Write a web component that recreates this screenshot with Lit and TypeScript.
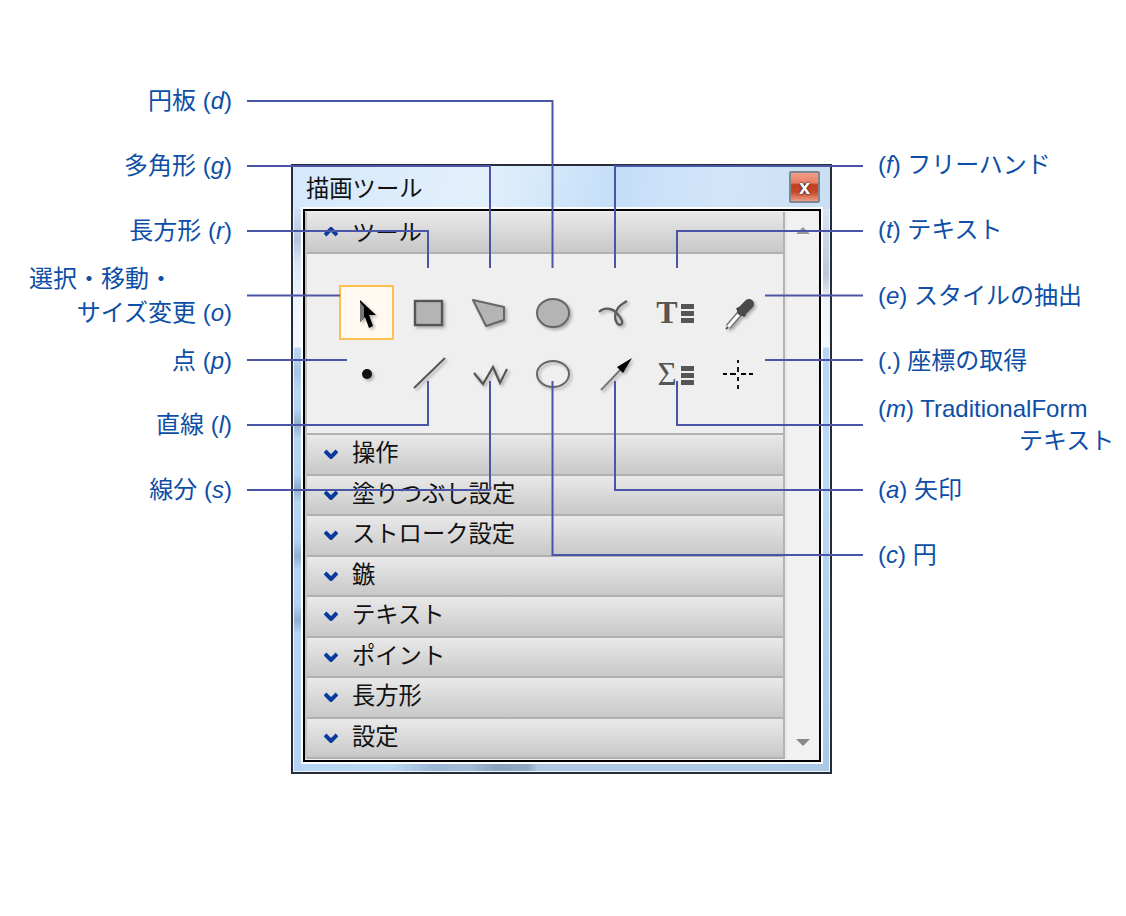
import { LitElement, html, css, svg } from "lit";
import { customElement } from "lit/decorators.js";

const S = 62;
const bars = svg`<g fill="#555"><rect x="35" y="22" width="13" height="5"/><rect x="35" y="29" width="13" height="5"/><rect x="35" y="36" width="13" height="5"/></g>`;
const icons = [
  svg`<rect x="4" y="4" width="53" height="53" fill="#fff9f1" stroke="#fdbf4d" stroke-width="2"/>
      <g class="sh"><path d="M24 18 L24 40 L29 35 L33 46 L37 44 L33 33 L40 33 Z" fill="#000"/><path d="M24 20 L24 40 L28 36 L28 25 Z" fill="#777"/></g>`,
  svg`<g class="sh"><rect x="17" y="19" width="27" height="24" fill="#b4b4b4" stroke="#555" stroke-width="2.4"/></g>`,
  svg`<g class="sh"><path d="M13 18 L44 25 L44 38 L26 44 Z" fill="#b4b4b4" stroke="#666" stroke-width="2" stroke-linejoin="round"/></g>`,
  svg`<g class="sh"><ellipse cx="31" cy="31" rx="16" ry="14" fill="#b4b4b4" stroke="#666" stroke-width="2"/></g>`,
  svg`<g class="sh"><path d="M15 30 C18 27 22 26 26 27 C31 28 36 34 38 39 C39 43 35 44 33 41 C30 37 31 31 34 26 C36 23 40 21 43 19" fill="none" stroke="#5c5c5c" stroke-width="2.4"/></g>`,
  svg`<text x="21" y="41" class="glyph">T</text>${bars}`,
  svg`<g class="sh"><path d="M20 45 L32 31" stroke="#777" stroke-width="6"/><path d="M20 45 L32 31" stroke="#fff" stroke-width="3"/><path d="M18 47 L20 45" stroke="#555" stroke-width="2"/><path d="M29 26 L37 34" stroke="#333" stroke-width="3"/><path d="M34 29 L41 22" stroke="#4a4a4a" stroke-width="10" stroke-linecap="round"/></g>`,
  svg`<g class="sh"><circle cx="31" cy="30" r="5" fill="#111"/></g>`,
  svg`<g class="sh"><path d="M16 44 L47 14" stroke="#555" stroke-width="2"/></g>`,
  svg`<g class="sh"><path d="M14 29 L23 40 L33 23 L40 39 L47 25" fill="none" stroke="#555" stroke-width="2.2"/></g>`,
  svg`<g class="sh"><ellipse cx="31" cy="30" rx="16" ry="13" fill="none" stroke="#666" stroke-width="2"/></g>`,
  svg`<g class="sh"><path d="M17 46 L40 22" stroke="#777" stroke-width="2"/><path d="M48 14 L33 23 L39 29 Z" fill="#000"/></g>`,
  svg`<text x="21" y="41" class="glyph thin">Σ</text>${bars}`,
  svg`<path d="M15 30 H19 M22 30 H28 M33 30 H38 M41 30 H45 M30 16 V19 M30 23 V28 M30 33 V37 M30 41 V45" fill="none" stroke="#000" stroke-width="1.8"/>`,
];

const sections = ["操作", "塗りつぶし設定", "ストローク設定", "鏃", "テキスト", "ポイント", "長方形", "設定"];

const lines = [
  "M247 101H552.5V268", "M247 166H490V268", "M247 231H428V268", "M247 295.5H340", "M247 360H347",
  "M247 425H428V381", "M247 490H490V381", "M552.5 381V555H863", "M615 381V490H863", "M677 381V425H863",
  "M863 166H615V268", "M863 231H677V268", "M863 295.5H765", "M863 360H765",
];

type L = { y: number; pre?: string; key?: string; post?: string; right?: number; left?: number };
const labels: L[] = [
  { y: 101, pre: "円板 (", key: "d", post: ")", right: 232 },
  { y: 166, pre: "多角形 (", key: "g", post: ")", right: 232 },
  { y: 231, pre: "長方形 (", key: "r", post: ")", right: 232 },
  { y: 279, pre: "選択・移動・", left: 29 },
  { y: 313, pre: "サイズ変更 (", key: "o", post: ")", right: 232 },
  { y: 361, pre: "点 (", key: "p", post: ")", right: 232 },
  { y: 425, pre: "直線 (", key: "l", post: ")", right: 232 },
  { y: 490, pre: "線分 (", key: "s", post: ")", right: 232 },
  { y: 165, pre: "(", key: "f", post: ") フリーハンド", left: 878 },
  { y: 230, pre: "(", key: "t", post: ") テキスト", left: 878 },
  { y: 296, pre: "(", key: "e", post: ") スタイルの抽出", left: 878 },
  { y: 361, pre: "(.) 座標の取得", left: 878 },
  { y: 409, pre: "(", key: "m", post: ") TraditionalForm", left: 878 },
  { y: 441, pre: "テキスト", left: 1019 },
  { y: 490, pre: "(", key: "a", post: ") 矢印", left: 878 },
  { y: 555, pre: "(", key: "c", post: ") 円", left: 878 },
];

@customElement("app-root")
export class AppRoot extends LitElement {
  static styles = css`
    :host { display: block; }
    .stage {
      position: relative; width: 1126px; height: 916px; background: #fff; overflow: hidden;
      padding: 164px 0 0 291px; box-sizing: border-box;
    }
    .win {
      width: 541px; height: 610px; box-sizing: border-box; border: 2px solid #272c38;
      display: flex; flex-direction: column; position: relative;
      background-color: #b5d3f0;
      background-image:
        linear-gradient(180deg, #cfe3f8 0, #b5c5de 31px, #d8e6f5 53px, #eef5fd 91px, #f4f9fe 138px, #bcd8f4 139px, #a9c5e4 163px, #bcd8f4 181px, #b5d2f0 201px, #93aeca 215px, #bad6f2 229px, #b5d2f0 266px, #8fa9c8 279px, #b8d5f2 293px, #b5d3f1 331px, #94aecf 347px, #b7d4f2 361px, #b5d2f0 396px, #94aed2 411px, #b7d4f2 425px, #b5d3f0 100%),
        linear-gradient(180deg, #d6e6f7 0, #b9c8db 66px, #eef4fb 91px, #f4f8fd 138px, #b7d6f5 139px, #bcd9f6 271px, #b9d5f2 331px, #aac8e6 100%),
        linear-gradient(90deg, #b7d6f3 0, #b9d7f3 100px, #9cb6d6 143px, #a4bcd8 175px, #8ba2bc 205px, #90a8c4 235px, #aec8e4 245px, #aac8e6 100%);
      background-repeat: no-repeat;
      background-position: 1px 43px, 530px 43px, 0 598px;
      background-size: 8px 562px, 7px 562px, 100% 8px;
      font-family: "Noto Sans CJK JP", "Liberation Sans", sans-serif;
      box-shadow: inset 0 0 0 1px #eef6fd;
    }
    .title {
      height: 43px; flex: none; display: flex; align-items: center; justify-content: space-between;
      padding: 0 10px 0 13px; box-sizing: border-box; font-size: 23.3px; color: #111;
      background: linear-gradient(100deg, #d5e8fb 0%, #e3f0fc 35%, #c4def8 60%, #d3e6f9 80%, #cbdff2 100%);
    }
    .title span { position: relative; top: -1px; }
    .close {
      width: 31px; height: 32px; box-sizing: border-box; border: 2px solid #7d8790; border-radius: 2px;
      position: relative; top: -1px; color: #fff; display: grid; place-items: center;
      background: linear-gradient(180deg, #f39c85 0%, #e98066 35%, #c33d1c 42%, #c84a28 68%, #ef9c85 100%);
      font: bold 20px/1 "Liberation Sans", sans-serif; text-shadow: 0 0 2px #334, 0 0 2px #334;
    }
    .frame {
      flex: 1; min-height: 0; margin: 0 9px 10px 10px; display: flex;
      border: 2px solid #000; outline: 2px solid #fafcff; background: #f0f0f0;
      padding: 1px 0 1px 0;
    }
    .acc { width: 480px; flex: none; box-sizing: border-box; border-right: 2px solid #b4b4b4; border-left: 2px solid #c4c4c4; }
    .hd {
      height: 40.5px; box-sizing: border-box; border-bottom: 2px solid #b0b0b0;
      display: flex; align-items: center; padding-left: 17px; gap: 14px;
      background: linear-gradient(180deg, #e9e9e9 0%, #c8c8c8 100%);
      font-size: 23.3px; color: #111; white-space: nowrap;
    }
    .hd.first { height: 42px; }
    .hd svg { flex: none; width: 14px; height: 10px; }
    .hd span { position: relative; top: -3px; }
    .hd.first span { top: -1px; }
    .body {
      height: 181px; box-sizing: border-box; border-bottom: 2px solid #b0b0b0; background: #efefef;
      padding: 28px 0 0 29px; display: grid; grid-template-columns: repeat(7, ${S}px);
      grid-auto-rows: ${S}px;
    }
    .body svg { display: block; width: ${S}px; height: ${S}px; overflow: visible; }
    .sh { filter: drop-shadow(2px 2px 1.5px rgba(0,0,0,.28)); }
    .glyph { font: bold 32px "Liberation Serif", serif; fill: #555; text-anchor: middle; }
    .glyph.thin { font-weight: normal; font-size: 33px; }
    .bar { flex: 1; display: flex; flex-direction: column; justify-content: space-between; align-items: center;
      padding: 14px 0 12px; background: #f1f1f1; border-left: 2px solid #e8e8e8; }
    .bar svg { width: 16px; height: 9px; display: block; }
    .over { position: absolute; left: 0; top: 0; pointer-events: none; }
    .lab {
      position: absolute; white-space: nowrap; height: 30px; color: #0d4ea6;
      font: 24px/30px "Liberation Sans", "Noto Sans CJK JP", sans-serif;
    }
  `;

  chev(up: boolean) {
    return html`<svg viewBox="0 0 14 10"><path d=${up ? "M1 8 L7 2 L13 8" : "M1 2 L7 8 L13 2"} fill="none" stroke="#0b3a9e" stroke-width="4"/></svg>`;
  }

  render() {
    return html`<div class="stage">
      <div class="win">
        <div class="title"><span>描画ツール</span><div class="close">x</div></div>
        <div class="frame">
          <div class="acc">
            <div class="hd first">${this.chev(true)}<span>ツール</span></div>
            <div class="body">
              ${icons.map((i) => html`<svg viewBox="0 0 ${S} ${S}">${i}</svg>`)}
            </div>
            ${sections.map((s) => html`<div class="hd">${this.chev(false)}<span>${s}</span></div>`)}
          </div>
          <div class="bar">
            <svg viewBox="0 0 16 9"><path d="M8 1 L15 8 H1 Z" fill="#999"/></svg>
            <svg viewBox="0 0 16 9"><path d="M8 8 L15 1 H1 Z" fill="#888"/></svg>
          </div>
        </div>
      </div>
      <svg class="over" width="1126" height="916" viewBox="0 0 1126 916">
        ${lines.map((d) => svg`<path d=${d} fill="none" stroke="#4a55a5" stroke-width="2"/>`)}
      </svg>
      ${labels.map((l) => html`<div class="lab" style="top:${l.y - 15}px;${l.right !== undefined ? `right:${1126 - l.right}px` : `left:${l.left}px`}">${l.pre}${l.key ? html`<i>${l.key}</i>` : ""}${l.post ?? ""}</div>`)}
    </div>`;
  }
}
